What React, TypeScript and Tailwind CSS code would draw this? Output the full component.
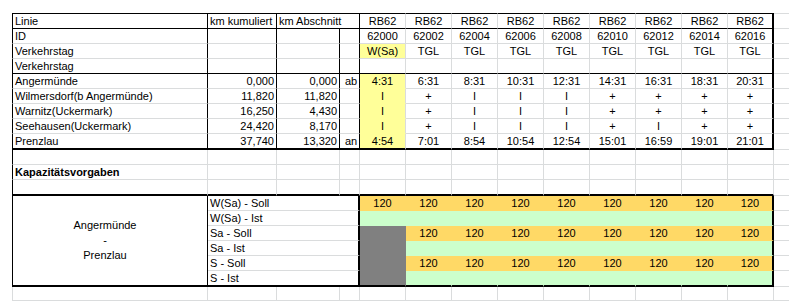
import { Fragment } from "react";
import type { ReactNode } from "react";

const ids = ["62000", "62002", "62004", "62006", "62008", "62010", "62012", "62014", "62016"];

const stations = [
    { name: "Angermünde", kum: "0,000", abs: "0,000", mark: "ab", times: ["4:31", "6:31", "8:31", "10:31", "12:31", "14:31", "16:31", "18:31", "20:31"] },
    { name: "Wilmersdorf(b Angermünde)", kum: "11,820", abs: "11,820", mark: "", times: ["I", "+", "I", "I", "I", "+", "+", "+", "+"] },
    { name: "Warnitz(Uckermark)", kum: "16,250", abs: "4,430", mark: "", times: ["I", "+", "I", "I", "I", "+", "+", "+", "+"] },
    { name: "Seehausen(Uckermark)", kum: "24,420", abs: "8,170", mark: "", times: ["I", "+", "I", "I", "I", "+", "I", "+", "+"] },
    { name: "Prenzlau", kum: "37,740", abs: "13,320", mark: "an", times: ["4:54", "7:01", "8:54", "10:54", "12:54", "15:01", "16:59", "19:01", "21:01"] },
];

const labels = ["W(Sa) - Soll", "W(Sa) - Ist", "Sa - Soll", "Sa - Ist", "S - Soll", "S - Ist"];

function Cell({ className = "", children }: { className?: string; children?: ReactNode }) {
    return (
        <div className={"overflow-hidden whitespace-nowrap leading-[14px] " + className}>
            {children}
        </div>
    );
}

// the last train column closes the table on the right
function trainRight(i: number) {
    return i === 8 ? "border-r-2 border-r-black" : "border-r border-r-[#dadcdd]";
}

export default function App() {
    return (
        <div className="h-[302px] w-[789px] overflow-hidden bg-white pl-[12px] pt-[13px] font-['Liberation_Sans',Arial,sans-serif] text-[11px] text-black">
            <div className="grid grid-cols-[196px_69px_63px_20px_repeat(9,46px)_15px] grid-rows-[16px_repeat(7,15px)_16px_15px_15px_16px_repeat(5,15px)_16px_14px]">
                {/* Kopfzeile */}
                <Cell className="border-l border-t border-r border-b border-black pl-[2px]">Linie</Cell>
                <Cell className="border-t border-r border-b border-black pl-[2px]">km kumuliert</Cell>
                <Cell className="col-span-2 border-t border-r border-b border-black pl-[2px]">km Abschnitt</Cell>
                {ids.map((id, i) => (
                    <Cell key={id} className={"border-t border-b border-t-black border-b-black text-center " + trainRight(i)}>
                        RB62
                    </Cell>
                ))}
                <Cell className="border-t border-b border-[#dadcdd]" />

                {/* ID / Verkehrstag */}
                {["ID", "Verkehrstag", "Verkehrstag"].map((label, r) => {
                    const bottom = r === 2 ? "border-b border-b-black" : "border-b border-b-[#dadcdd]";
                    return (
                        <Fragment key={r}>
                            <Cell className={"border-l border-r border-black pl-[2px] " + bottom}>{label}</Cell>
                            <Cell className={"border-r border-r-black " + bottom} />
                            <Cell className={"border-r border-r-black " + bottom} />
                            <Cell className={"border-r border-r-black " + bottom} />
                            {ids.map((id, i) => {
                                let text = "";
                                if (r === 0) text = id;
                                if (r === 1) text = i === 0 ? "W(Sa)" : "TGL";
                                return (
                                    <Cell
                                        key={id}
                                        className={"text-center " + trainRight(i) + " " + bottom + (r === 1 && i === 0 ? " bg-[#ffff99]" : "")}
                                    >
                                        {text}
                                    </Cell>
                                );
                            })}
                            <Cell className="border-b border-b-[#dadcdd]" />
                        </Fragment>
                    );
                })}

                {/* Stationen */}
                {stations.map((s, r) => {
                    const last = r === stations.length - 1;
                    const bottom = last ? "border-b-2 border-b-black" : "border-b border-b-[#dadcdd]";
                    return (
                        <Fragment key={s.name}>
                            <Cell className={"border-l border-r border-l-black border-r-black pl-[2px] " + bottom}>{s.name}</Cell>
                            <Cell className={"border-r border-r-black pr-[2px] text-right " + bottom}>{s.kum}</Cell>
                            <Cell className={"border-r border-r-black pr-[2px] text-right " + bottom}>{s.abs}</Cell>
                            <Cell className={"border-r border-r-black pl-[5px] " + bottom}>{s.mark}</Cell>
                            {s.times.map((t, i) => (
                                <Cell
                                    key={i}
                                    className={
                                        "text-center " +
                                        trainRight(i) +
                                        " " +
                                        (i === 0
                                            ? "bg-[#ffff99] " + (last ? "border-b-2 border-b-black" : "border-b border-b-transparent")
                                            : bottom)
                                    }
                                >
                                    {t}
                                </Cell>
                            ))}
                            <Cell className="border-b border-b-[#dadcdd]" />
                        </Fragment>
                    );
                })}

                {/* Leerzeilen + Überschrift */}
                {["", "Kapazitätsvorgaben", ""].map((txt, r) => {
                    const bottom = r === 2 ? "border-b-2 border-b-black" : "border-b border-b-[#dadcdd]";
                    return (
                        <Fragment key={r}>
                            <Cell className={"border-l border-r border-l-black border-r-[#dadcdd] pl-[2px] font-bold " + bottom}>{txt}</Cell>
                            <Cell className={"border-r border-r-[#dadcdd] " + bottom} />
                            <Cell className={"border-r border-r-[#dadcdd] " + bottom} />
                            <Cell className={"border-r border-r-[#dadcdd] " + bottom} />
                            {ids.map((id) => (
                                <Cell key={id} className={"border-r border-r-[#dadcdd] " + bottom} />
                            ))}
                            <Cell className="border-b border-b-[#dadcdd]" />
                        </Fragment>
                    );
                })}

                {/* Kapazitätsvorgaben */}
                {labels.map((label, k) => {
                    const soll = k % 2 === 0;
                    const last = k === labels.length - 1;
                    const fillBottom = last ? "border-b-2 border-b-black" : "border-b border-b-transparent";
                    return (
                        <Fragment key={label}>
                            {k === 0 && (
                                <Cell className="row-span-6 flex flex-col items-center justify-center border-l border-r border-b-2 border-l-black border-r-black border-b-black pr-[10px] leading-[15px]">
                                    <span>Angermünde</span>
                                    <span>-</span>
                                    <span>Prenzlau</span>
                                </Cell>
                            )}
                            <Cell
                                className={
                                    "col-span-3 border-r-2 border-r-black pl-[2px] " +
                                    (last ? "border-b-2 border-b-black" : "border-b border-b-[#dadcdd]")
                                }
                            >
                                {label}
                            </Cell>
                            {k < 2 && (
                                <Cell
                                    className={
                                        "border-r border-r-transparent text-center " +
                                        fillBottom +
                                        (soll ? " bg-[#ffd966]" : " bg-[#ccffcc]")
                                    }
                                >
                                    {soll ? "120" : ""}
                                </Cell>
                            )}
                            {k === 2 && (
                                <Cell className="row-span-4 border-r border-b-2 border-r-transparent border-b-black bg-[#808080]" />
                            )}
                            {ids.slice(1).map((id, i) => (
                                <Cell
                                    key={id}
                                    className={
                                        "text-center " +
                                        (i === 7 ? "border-r-2 border-r-black " : "border-r border-r-transparent ") +
                                        fillBottom +
                                        (soll ? " bg-[#ffd966]" : " bg-[#ccffcc]")
                                    }
                                >
                                    {soll ? "120" : ""}
                                </Cell>
                            ))}
                            <Cell className="border-b border-b-[#dadcdd]" />
                        </Fragment>
                    );
                })}

                {/* letzte Zeile */}
                <Cell className="border-l border-r border-b border-[#dadcdd]" />
                <Cell className="border-r border-b border-[#dadcdd]" />
                <Cell className="border-r border-b border-[#dadcdd]" />
                <Cell className="border-r border-b border-[#dadcdd]" />
                {ids.map((id) => (
                    <Cell key={id} className="border-r border-b border-[#dadcdd]" />
                ))}
                <Cell className="border-b border-[#dadcdd]" />
            </div>
        </div>
    );
}
